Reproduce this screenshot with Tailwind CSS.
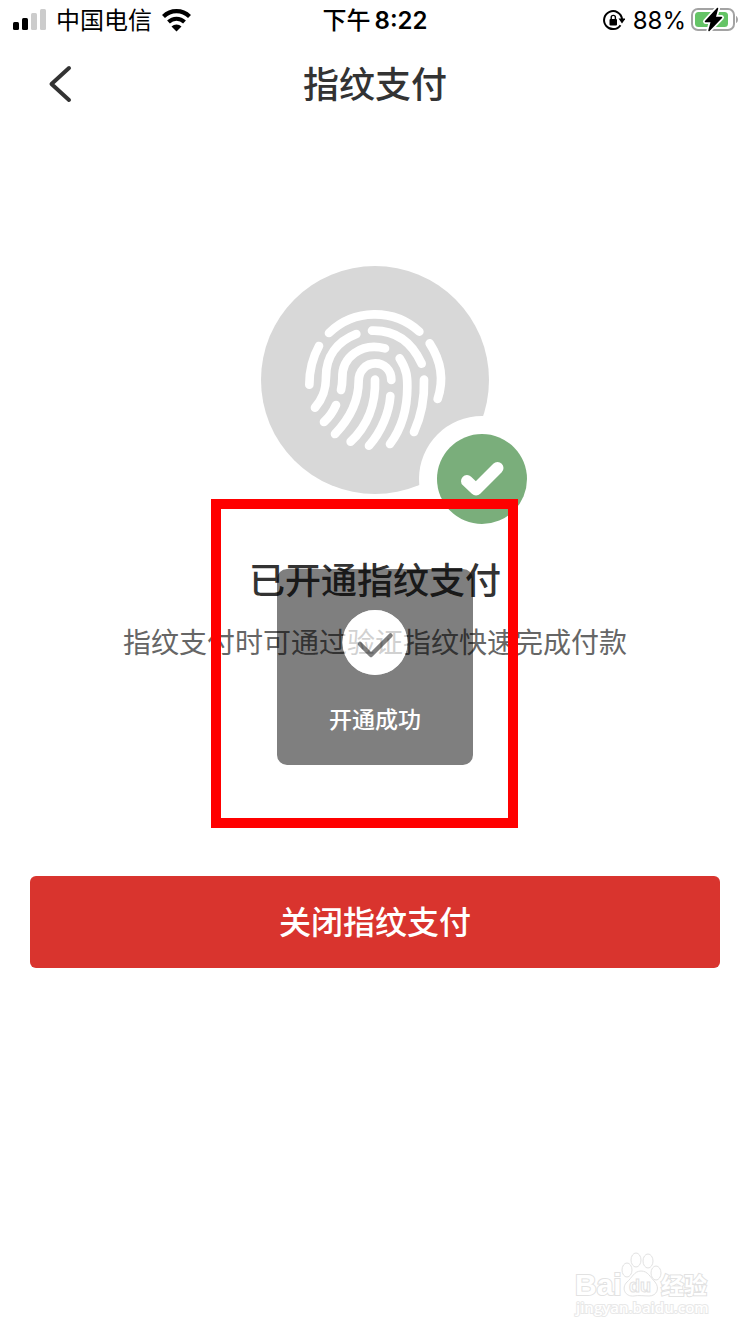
<!DOCTYPE html>
<html lang="zh-CN">
<head>
    <meta charset="UTF-8">
    <meta name="viewport" content="width=device-width, initial-scale=1.0">
    <title>指纹支付</title>
    <script src="https://cdn.jsdelivr.net/npm/@tailwindcss/browser@4"></script>
</head>
<body class="relative min-h-screen bg-white text-[#333333] font-['Inter','Noto_Sans_CJK_SC',sans-serif]">

    <!-- Status bar -->
    <div class="grid grid-cols-3 items-center h-10 px-3 text-2xl text-black">
        <div class="flex items-center gap-2">
            <svg class="w-9 h-6" viewBox="0 0 36 24">
                <rect x="1" y="14" width="6" height="8" rx="1.5" fill="#000"/>
                <rect x="10" y="10" width="6" height="12" rx="1.5" fill="#000"/>
                <rect x="19" y="5" width="6" height="17" rx="1.5" fill="#ccc"/>
                <rect x="28" y="1" width="6" height="21" rx="1.5" fill="#ccc"/>
            </svg>
            <span class="pt-0.5">中国电信</span>
            <svg class="w-8 h-6" viewBox="0 0 32 24">
                <path d="M3.500 8.500a18.500 18.500 0 0 1 26 0" fill="none" stroke="#000" stroke-width="4.200"/>
                <path d="M8.500 14a11.500 11.500 0 0 1 16 0" fill="none" stroke="#000" stroke-width="4"/>
                <path d="M11.500 18.500a7.500 7.500 0 0 1 10 0L16.500 23.500z" fill="#000"/>
            </svg>
        </div>
        <div class="flex items-center justify-center gap-1 pt-0.5 font-medium">
            <span>下午</span><span class="font-semibold">8:22</span>
        </div>
        <div class="flex items-center justify-end gap-1">
            <svg class="w-6 h-6 mr-1" viewBox="0 0 24 24">
                <path d="M19.500 17.200A9 9 0 1 1 21 11" fill="none" stroke="#000" stroke-width="2"/>
                <path d="M17.500 10.500h7l-3.500 5z" fill="#000"/>
                <rect x="8.500" y="11" width="7.500" height="6.500" rx="1" fill="#000"/>
                <path d="M10.200 11.500V9.500a2.100 2.100 0 0 1 4.200 0v2" fill="none" stroke="#000" stroke-width="1.400"/>
            </svg>
            <span class="pt-0.5">88%</span>
            <svg class="w-12 h-6 overflow-visible" viewBox="0 0 48 24">
                <rect x="2" y="1" width="42" height="21" rx="6" fill="#fff" stroke="#a3a3a3" stroke-width="2"/>
                <path d="M46 8c2.600 1 2.600 6 0 7z" fill="#a3a3a3"/>
                <rect x="5" y="4" width="33" height="15" rx="3.500" fill="#65c466"/>
                <path d="M27.500 0.500L15.500 13.500H21.500L19 22.500L31.500 9.500H25z" fill="#000" stroke="#fff" stroke-width="5" paint-order="stroke" stroke-linejoin="round"/>
                <path d="M27.500 0.500L15.500 13.500H21.500L19 22.500L31.500 9.500H25z" fill="#000" stroke="#000" stroke-width="1.500" stroke-linejoin="round"/>
            </svg>
        </div>
    </div>

    <!-- Header -->
    <header class="grid grid-cols-[64px_1fr_64px] items-center h-22 px-7">
        <button type="button" aria-label="返回" class="flex items-center justify-center w-16 h-16">
            <svg class="w-8 h-10" viewBox="0 0 32 40">
                <path d="M25 4L7.500 20L25 36" fill="none" stroke="#333" stroke-width="4" stroke-linecap="round" stroke-linejoin="round"/>
            </svg>
        </button>
        <h1 class="pt-0.5 text-4xl font-medium text-center">指纹支付</h1>
    </header>

    <main class="flex flex-col items-center px-[30px] pt-[138px]">
        <div class="relative w-[228px] h-[228px]">
            <svg class="w-full h-full" viewBox="0 0 228 228">
                <circle cx="114" cy="114" r="114" fill="#d8d8d8"/>
                <g transform="translate(29 29) scale(.33333)" fill="none" stroke="#fff" stroke-width="26" stroke-linecap="round">
                    <path d="M117 114A198 198 0 0 1 388 110"/>
                    <path d="M87 153Q58 205 58 269"/>
                    <path d="M419 145C455 200 462 255 443 312"/>
                    <path d="M199 117C140 140 108 185 108 245C108 290 95 315 75 338"/>
                    <path d="M246 107C315 105 365 140 395 206"/>
                    <path d="M285 160C215 142 155 185 157 250Q157 268 153 285"/>
                    <path d="M138 330Q125 360 102 381"/>
                    <path d="M304 255C304 224 282 205 256 205C228 205 206 228 206 258C206 320 180 370 135 417"/>
                    <path d="M255 254C258 330 230 395 182 440"/>
                    <path d="M329 190C352 225 352 250 352 275C352 340 335 400 300 447"/>
                    <path d="M301 303C298 350 275 410 237 452"/>
                    <path d="M402 254C404 310 395 360 372 411"/>
                </g>
            </svg>
            <div class="absolute left-[158px] top-[150px] rounded-full bg-white p-[18px]">
                <svg class="w-[90px] h-[90px]" viewBox="0 0 90 90">
                    <circle cx="45" cy="45" r="45" fill="#7aae7b"/>
                    <path d="M30 47L39 55.500L60.500 34" fill="none" stroke="#fff" stroke-width="12" stroke-linecap="round" stroke-linejoin="round"/>
                </svg>
            </div>
        </div>

        <h2 class="mt-[61px] text-4xl leading-[52px] font-medium">已开通指纹支付</h2>
        <p class="mt-4 text-[28px] leading-10 text-[#666666]">指纹支付时可通过验证指纹快速完成付款</p>

        <button type="button" class="mt-[213px] w-full h-[92px] rounded-md bg-[#d9342e] pt-0.5 text-[32px] font-medium text-white">关闭指纹支付</button>
    </main>

    <!-- Toast, with the highlight frame round it -->
    <div class="absolute inset-0 flex items-center justify-center pointer-events-none">
        <div role="status" class="relative w-[196px] h-[196px]">
            <svg class="absolute inset-0 w-full h-full" viewBox="0 0 196 196">
                <path fill="#000" fill-opacity=".5" fill-rule="evenodd" d="M10 0H186A10 10 0 0 1 196 10V186A10 10 0 0 1 186 196H10A10 10 0 0 1 0 186V10A10 10 0 0 1 10 0ZM98 41a32.500 32.500 0 1 0 0 65a32.500 32.500 0 1 0 0-65Z"/>
                <circle cx="98" cy="73.500" r="32.500" fill="#fff" fill-opacity=".7"/>
                <path d="M83 75L94 86L113.500 66.500" fill="none" stroke="#000" stroke-opacity=".5" stroke-width="4.500" stroke-linecap="round" stroke-linejoin="round"/>
            </svg>
            <p class="relative pt-[135px] text-[23px] leading-8 font-medium text-center text-white">开通成功</p>
            <div class="absolute -left-[66px] -top-[70px] w-[307px] h-[329px] border-10 border-[#ff0000]"></div>
        </div>
    </div>

    <!-- Watermark -->
    <svg class="absolute right-0 bottom-0 w-[190px] h-[94px]" viewBox="0 0 190 94" fill="#fff" stroke="#e2e2e2" stroke-width="1">
        <g font-family="Liberation Sans, Noto Sans CJK SC, sans-serif" font-weight="700">
            <text x="15" y="55" font-size="30" stroke-width="2" paint-order="stroke">Bai</text>
            <ellipse cx="67" cy="30" rx="5" ry="7"/>
            <ellipse cx="76" cy="20" rx="5" ry="7"/>
            <ellipse cx="88" cy="21" rx="5" ry="7"/>
            <ellipse cx="96" cy="33" rx="5" ry="7"/>
            <path d="M81 31C88 31 90 37 95 42C100 48 97 56 89 56C84 56 78 55 74 56C65 57 61 48 67 42C72 38 74 31 81 31Z"/>
            <text x="69" y="52" font-size="18">du</text>
            <text x="101" y="54" font-size="23" stroke-width="2" paint-order="stroke">经验</text>
        </g>
        <text x="16" y="73" font-family="Open Sans, sans-serif" font-size="15" font-weight="600" stroke="#e8e8e8" stroke-width="2" paint-order="stroke">jingyan.baidu.com</text>
    </svg>

</body>
</html>
